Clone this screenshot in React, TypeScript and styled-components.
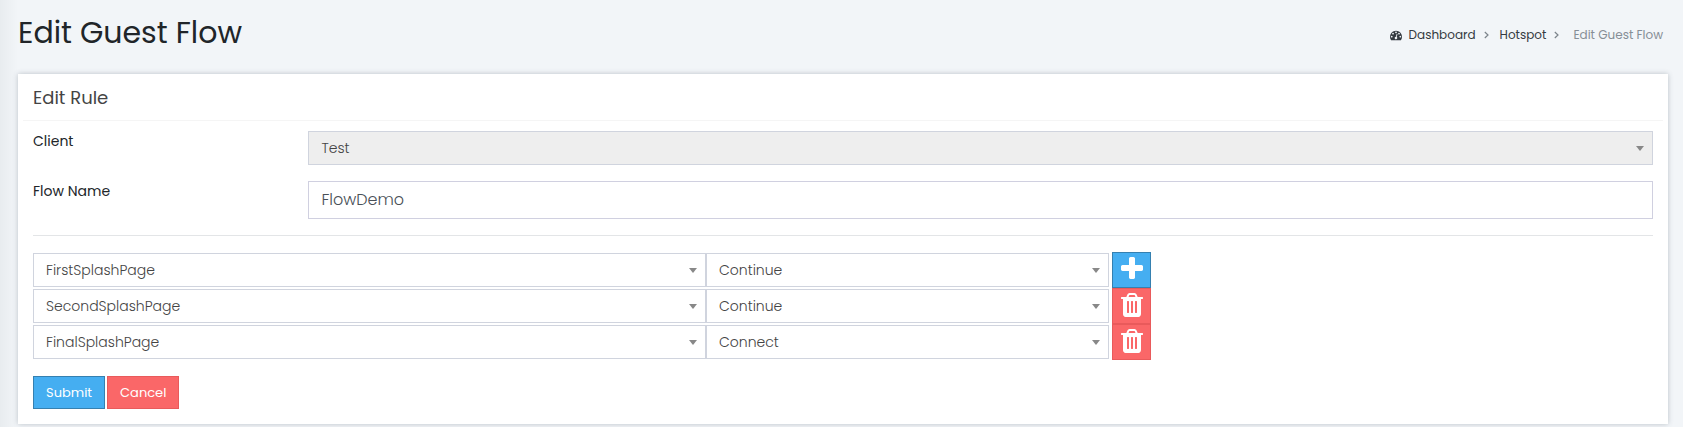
import React from "react";
import styled, { createGlobalStyle } from "styled-components";

const GlobalStyle = createGlobalStyle`
  *, *::before, *::after { box-sizing: border-box; }
  body {
    margin: 0;
    background: #f2f5f8;
    color: #212529;
    font-family: Poppins, Inter, "Liberation Sans", sans-serif;
    font-size: 14px;
    line-height: 20px;
  }
  button, input, select { font-family: inherit; }
`;

const Page = styled.main`
  min-height: 100vh;
  padding: 13px 15px 3px 18px;
  background: linear-gradient(to right, #e8ecef, #f2f5f8 18px);
`;

const PageHeader = styled.header`
  display: flex;
  align-items: center;
  justify-content: space-between;
  padding-right: 5px;
  margin-bottom: 21px;
`;

const PageTitle = styled.h1`
  margin: 0;
  font-size: 30px;
  line-height: 40px;
  font-weight: 400;
`;

const Breadcrumb = styled.ol`
  display: flex;
  align-items: center;
  margin: 0;
  padding: 4px 0 0;
  list-style: none;
  font-size: 12px;
`;

const Crumb = styled.li`
  display: flex;
  align-items: center;
  color: #868e96;

  &[aria-current] {
    margin-left: 3px;
  }
`;

const CrumbLink = styled.a`
  display: flex;
  align-items: center;
  gap: 7px;
  color: #343a40;
  text-decoration: none;
`;

const Separator = styled.svg`
  width: 5px;
  height: 8px;
  margin: 0 11px 0 8px;
  fill: none;
  stroke: #7c848b;
  stroke-width: 1.2;
`;

const Card = styled.section`
  padding: 5px 5px 15px;
  background: #fff;
  box-shadow: 0 0 5px rgba(60, 75, 90, 0.3);
`;

const CardTitle = styled.h2`
  margin: 0;
  padding: 7px 10px 10px;
  border-bottom: 1px solid #f5f5f5;
  color: #444;
  font-size: 18px;
  line-height: 24px;
  font-weight: 400;
`;

const Form = styled.form`
  padding: 10px 10px 0;
`;

const Field = styled.div`
  display: grid;
  grid-template-columns: minmax(0, 17fr) minmax(0, 83fr);
  align-items: start;
  margin-bottom: 16px;
`;

const Label = styled.label`
  color: #212529;
`;

const SelectWrap = styled.span`
  position: relative;
  display: block;

  &::after {
    content: "";
    position: absolute;
    top: 15px;
    right: 9px;
    border: solid transparent;
    border-width: 5px 4px 0;
    border-top-color: #888;
    pointer-events: none;
  }
`;

const Select = styled.select`
  display: block;
  width: 100%;
  height: 34px;
  padding: 0 28px 0 12px;
  border: 1px solid #d0d4de;
  border-radius: 0;
  background: #fff;
  color: #444;
  font-size: 14px;
  font-weight: 300;
  appearance: none;

  &:disabled {
    background: #eee;
    color: #444;
    opacity: 1;
  }
`;

const TextInput = styled.input`
  display: block;
  width: 100%;
  height: 38px;
  padding: 0 12px 2px;
  border: 1px solid #d0d0e0;
  background: #fff;
  color: #495057;
  font-size: 16px;
  font-weight: 300;
`;

const Divider = styled.hr`
  margin: 0 0 16px;
  border: 0;
  border-top: 1px solid #e3e5e7;
`;

const Step = styled.div`
  display: grid;
  grid-template-columns: minmax(0, 673fr) minmax(0, 403fr) minmax(0, 544fr);
  align-items: center;
`;

const IconButton = styled.button<{ $danger?: boolean }>`
  display: flex;
  width: 39px;
  height: 36px;
  margin-left: 3px;
  padding: 2px 5px 4px;
  border: 1px solid ${(p) => (p.$danger ? "#e95a5b" : "#3580b0")};
  background: ${(p) => (p.$danger ? "#fa6768" : "#45aef1")};
  color: #fff;
  cursor: pointer;
`;

const Icon = styled.svg<{ $size: number }>`
  flex: none;
  width: ${(p) => p.$size}px;
  height: ${(p) => p.$size}px;
  fill: currentColor;
`;

const Actions = styled.div`
  display: flex;
  gap: 2px;
  margin-top: 16px;
`;

const Button = styled.button<{ $danger?: boolean }>`
  height: 33px;
  padding: 0 12px;
  border: 1px solid ${(p) => (p.$danger ? "#e95a5b" : "#3580b0")};
  background: ${(p) => (p.$danger ? "#fa6768" : "#45aef1")};
  color: #fff;
  font-size: 13px;
  cursor: pointer;
`;

const paths = {
  plus: "M1600 736v192q0 40-28 68t-68 28h-416v416q0 40-28 68t-68 28h-192q-40 0-68-28t-28-68v-416h-416q-40 0-68-28t-28-68v-192q0-40 28-68t68-28h416v-416q0-40 28-68t68-28h192q40 0 68 28t28 68v416h416q40 0 68 28t28 68z",
  trash:
    "M704 1376v-704q0-14-9-23t-23-9h-64q-14 0-23 9t-9 23v704q0 14 9 23t23 9h64q14 0 23-9t9-23zm256 0v-704q0-14-9-23t-23-9h-64q-14 0-23 9t-9 23v704q0 14 9 23t23 9h64q14 0 23-9t9-23zm256 0v-704q0-14-9-23t-23-9h-64q-14 0-23 9t-9 23v704q0 14 9 23t23 9h64q14 0 23-9t9-23zm-544-992h448l-48-117q-7-9-17-11h-317q-10 2-17 11zm928 32v64q0 14-9 23t-23 9h-96v948q0 83-47 143.5t-113 60.5h-832q-66 0-113-58.5t-47-141.5v-952h-96q-14 0-23-9t-9-23v-64q0-14 9-23t23-9h309l70-167q15-37 54-63t79-26h320q40 0 79 26t54 63l70 167h309q14 0 23 9t9 23z",
  gauge:
    "M384 1152q0-53-37.5-90.5t-90.5-37.5-90.5 37.5-37.5 90.5 37.5 90.5 90.5 37.5 90.5-37.5 37.5-90.5zm192-448q0-53-37.5-90.5t-90.5-37.5-90.5 37.5-37.5 90.5 37.5 90.5 90.5 37.5 90.5-37.5 37.5-90.5zm428 481l101-382q6-26-7.5-48.5t-38.5-29.5-48 6.5-30 39.5l-101 382q-60 5-107 43.5t-63 98.5q-20 77 20 146t117 89 146-20 89-117q16-60-6-117t-72-91zm660-33q0-53-37.5-90.5t-90.5-37.5-90.5 37.5-37.5 90.5 37.5 90.5 90.5 37.5 90.5-37.5 37.5-90.5zm-640-640q0-53-37.5-90.5t-90.5-37.5-90.5 37.5-37.5 90.5 37.5 90.5 90.5 37.5 90.5-37.5 37.5-90.5zm448 192q0-53-37.5-90.5t-90.5-37.5-90.5 37.5-37.5 90.5 37.5 90.5 90.5 37.5 90.5-37.5 37.5-90.5zm320 448q0 261-141 483-19 29-54 29h-1402q-35 0-54-29-141-221-141-483 0-182 71-348t191-286 286-191 348-71 348 71 286 191 191 286 71 348z",
};

function Glyph({ name, size }: { name: keyof typeof paths; size: number }) {
  return (
    <Icon $size={size} viewBox="0 0 1792 1792" aria-hidden="true">
      <path d={paths[name]} />
    </Icon>
  );
}

function Chevron() {
  return (
    <Separator viewBox="0 0 5 8" aria-hidden="true">
      <path d="M0.8 1 4 4 0.8 7" />
    </Separator>
  );
}

type PickerProps = {
  value: string;
  options: string[];
  id?: string;
  label?: string;
  disabled?: boolean;
};

function Picker({ value, options, id, label, disabled }: PickerProps) {
  return (
    <SelectWrap>
      <Select id={id} aria-label={label} defaultValue={value} disabled={disabled}>
        {options.map((option) => (
          <option key={option}>{option}</option>
        ))}
      </Select>
    </SelectWrap>
  );
}

const steps = [
  { page: "FirstSplashPage", action: "Continue" },
  { page: "SecondSplashPage", action: "Continue" },
  { page: "FinalSplashPage", action: "Connect" },
];
const pages = steps.map((step) => step.page);

export default function App() {
  return (
    <>
      <GlobalStyle />
      <Page>
        <PageHeader>
          <PageTitle>Edit Guest Flow</PageTitle>
          <nav aria-label="Breadcrumb">
            <Breadcrumb>
              <Crumb>
                <CrumbLink href="#dashboard">
                  <Glyph name="gauge" size={12} />
                  Dashboard
                </CrumbLink>
                <Chevron />
              </Crumb>
              <Crumb>
                <CrumbLink href="#hotspot">Hotspot</CrumbLink>
                <Chevron />
              </Crumb>
              <Crumb aria-current="page">Edit Guest Flow</Crumb>
            </Breadcrumb>
          </nav>
        </PageHeader>
        <Card>
          <CardTitle>Edit Rule</CardTitle>
          <Form onSubmit={(event) => event.preventDefault()}>
            <Field>
              <Label htmlFor="client">Client</Label>
              <Picker id="client" value="Test" options={["Test"]} disabled />
            </Field>
            <Field>
              <Label htmlFor="flow-name">Flow Name</Label>
              <TextInput id="flow-name" type="text" defaultValue="FlowDemo" />
            </Field>
            <Divider />
            {steps.map((step, index) => (
              <Step key={step.page}>
                <Picker label={`Page ${index + 1}`} value={step.page} options={pages} />
                <Picker
                  label={`Action ${index + 1}`}
                  value={step.action}
                  options={["Continue", "Connect"]}
                />
                <IconButton
                  type="button"
                  $danger={index > 0}
                  aria-label={index > 0 ? "Remove step" : "Add step"}
                >
                  <Glyph name={index > 0 ? "trash" : "plus"} size={28} />
                </IconButton>
              </Step>
            ))}
            <Actions>
              <Button type="submit">Submit</Button>
              <Button type="button" $danger>
                Cancel
              </Button>
            </Actions>
          </Form>
        </Card>
      </Page>
    </>
  );
}
